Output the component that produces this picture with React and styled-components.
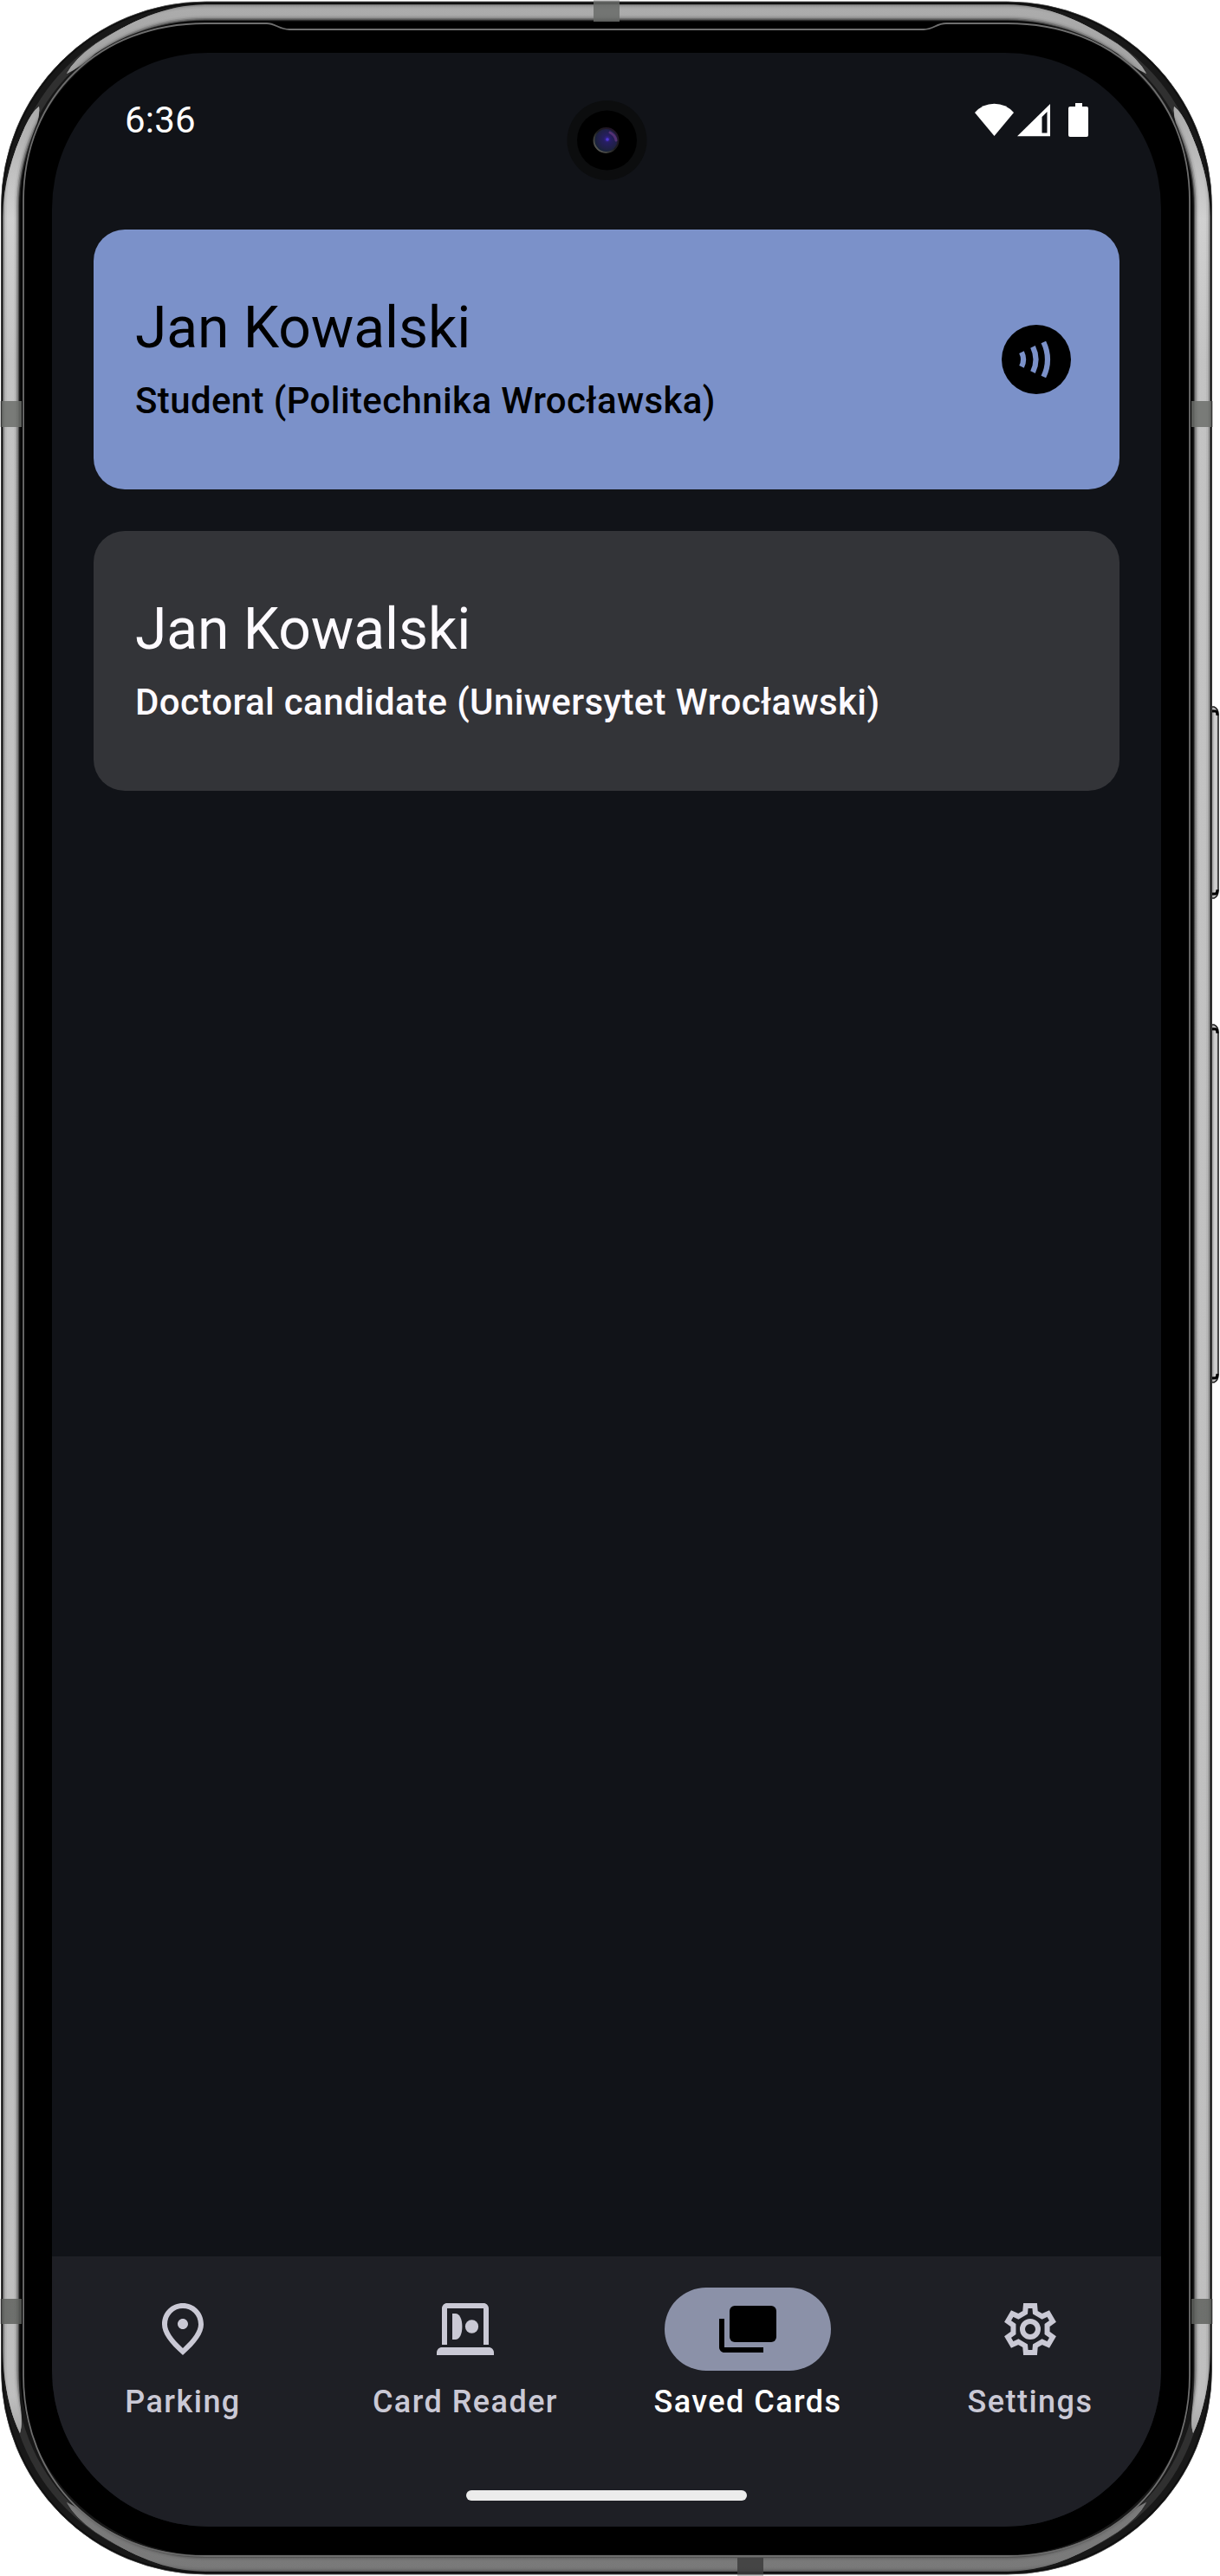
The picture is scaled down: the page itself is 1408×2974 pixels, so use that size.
import React from 'react';
import styled, { createGlobalStyle } from 'styled-components';

const GlobalStyle = createGlobalStyle`
  * { box-sizing: border-box; }
  html, body { margin: 0; padding: 0; background: #ffffff; }
  body { font-family: Roboto, "Noto Sans", sans-serif; }
`;

const Device = styled.div`
  position: relative;
  width: 1408px;
  height: 2974px;
  padding: 61px 68px 57px 60px;
  overflow: hidden;
`;

const FrameArt = styled.svg`
  position: absolute;
  inset: 0;
  display: block;
`;

const Screen = styled.main`
  position: relative;
  width: 1280px;
  height: 2856px;
  display: flex;
  flex-direction: column;
  overflow: hidden;
  border-radius: 180px;
  background: #111318;
`;

const StatusBar = styled.header`
  height: 156px;
  flex: none;
  display: flex;
  justify-content: space-between;
  padding: 53px 83px 0 84px;
  color: #ffffff;
`;

const Clock = styled.time`
  font-size: 42px;
  line-height: 49px;
  letter-spacing: 0.2px;
`;

const StatusIcons = styled.svg`
  display: block;
  margin-top: 4px;
`;

const Camera = styled.svg`
  position: absolute;
  left: 594px;
  top: 55px;
`;

const CardList = styled.section`
  flex: 1;
  display: flex;
  flex-direction: column;
  gap: 48px;
  padding: 48px;
`;

const Card = styled.article`
  height: 300px;
  display: flex;
  align-items: center;
  justify-content: space-between;
  padding: 0 48px;
  border-radius: 36px;
  background: ${(p) => (p.$active ? '#7b91c9' : '#333438')};
  color: ${(p) => (p.$active ? '#000000' : '#fdfaff')};
`;

const CardText = styled.div`
  display: flex;
  flex-direction: column;
  gap: 12px;
`;

const CardName = styled.h2`
  margin: 0;
  font-size: 66px;
  font-weight: 400;
  line-height: 84px;
  letter-spacing: -0.1px;
`;

const CardRole = styled.p`
  margin: 0;
  font-size: 42px;
  font-weight: 500;
  line-height: 60px;
  letter-spacing: 0.38px;
`;

const NavBar = styled.nav`
  height: 312px;
  flex: none;
  display: flex;
  flex-direction: column;
  align-items: center;
  background: #1e1f25;
`;

const Tabs = styled.div`
  width: 100%;
  height: 270px;
  display: grid;
  grid-template-columns: repeat(4, 1fr);
  column-gap: 24px;
  padding-top: 36px;
`;

const Tab = styled.div`
  display: flex;
  flex-direction: column;
  align-items: center;
  gap: 12px;
  color: ${(p) => (p.$active ? '#ffffff' : '#cac9d5')};
`;

const Pill = styled.span`
  width: 192px;
  height: 96px;
  display: flex;
  align-items: center;
  justify-content: center;
  border-radius: 48px;
  background: ${(p) => (p.$active ? '#8b91a8' : 'transparent')};
  color: ${(p) => (p.$active ? '#000000' : '#cac9d5')};
`;

const TabLabel = styled.span`
  font-size: 36px;
  font-weight: 500;
  line-height: 48px;
  letter-spacing: 1.45px;
  white-space: nowrap;
`;

const HomeHandle = styled.div`
  width: 324px;
  height: 12px;
  border-radius: 6px;
  background: #ececec;
`;

const Icon = ({ children }) => (
  <svg width="72" height="72" viewBox="0 0 24 24" fill="currentColor">{children}</svg>
);

const PinIcon = () => (
  <Icon>
    <path d="M12 12c-1.1 0-2-.9-2-2s.9-2 2-2 2 .9 2 2-.9 2-2 2zm6-1.8C18 6.57 15.35 4 12 4s-6 2.57-6 6.2c0 2.34 1.95 5.44 6 9.14 4.05-3.7 6-6.8 6-9.14zM12 2c4.2 0 8 3.22 8 8.2 0 3.32-2.67 7.25-8 11.8-5.33-4.55-8-8.48-8-11.8C4 5.22 7.8 2 12 2z" />
  </Icon>
);

const ReaderIcon = () => (
  <Icon>
    <path d="M3 18V4c0-1.1.9-2 2-2h14c1.1 0 2 .9 2 2v14h-2V4H5v14z" />
    <path d="M1 22v-1c0-1.1.9-2 2-2h18c1.1 0 2 .9 2 2v1z" />
    <path d="M7 6h1.2C9.700 6 10.800 8 10.800 11s-1.100 5-2.600 5H7z" />
    <circle cx="14.500" cy="11" r="2.550" />
  </Icon>
);

const CardsIcon = () => (
  <Icon>
    <rect x="5" y="3" width="18" height="14" rx="2" />
    <path d="M1 8h2v11h15v2H3c-1.100 0-2-.9-2-2z" />
  </Icon>
);

const gearPoints = [0, 60, 120, 180, 240, 300]
  .flatMap((deg) =>
    [[-1.95, -6.4], [-1.72, -9], [1.72, -9], [1.95, -6.4]].map(([x, y]) => {
      const a = (deg * Math.PI) / 180;
      const px = 12 + x * Math.cos(a) - y * Math.sin(a);
      const py = 12 + x * Math.sin(a) + y * Math.cos(a);
      return `${px.toFixed(2)},${py.toFixed(2)}`;
    })
  )
  .join(' ');

const GearIcon = () => (
  <Icon>
    <polygon points={gearPoints} fill="none" stroke="currentColor" strokeWidth="2" />
    <circle cx="12" cy="12" r="3" fill="none" stroke="currentColor" strokeWidth="2" />
  </Icon>
);

const ContactlessIcon = () => (
  <svg width="96" height="96" viewBox="0 0 24 24" fill="none">
    <circle cx="12" cy="12" r="10" fill="#000" />
    <g stroke="#7b91c9" strokeWidth="1.55">
      <path d="M7.750 9.900A4.700 4.700 0 0 1 7.750 14.100" />
      <path d="M11 8.350A8.400 8.400 0 0 1 11 15.650" />
      <path d="M14.080 7A11.300 11.300 0 0 1 14.080 17" />
    </g>
  </svg>
);

const metalRings = [
  [20, 0.3],
  [18, 0.4],
  [15, 0.5],
  [12, 0.6],
  [8, 0.6],
];

const Frame = () => (
  <FrameArt width="1408" height="2974" viewBox="0 0 1408 2974" fill="none">
    <defs>
      <linearGradient id="metal" gradientUnits="userSpaceOnUse" x1="0" y1="0" x2="0" y2="2974">
        <stop offset="0" stopColor="#b2b2b2" />
        <stop offset="0.03" stopColor="#a4a4a4" />
        <stop offset="0.085" stopColor="#d6d6d6" />
        <stop offset="0.14" stopColor="#c8c8c8" />
        <stop offset="0.9" stopColor="#c4c4c4" />
        <stop offset="0.93" stopColor="#c4c4c4" />
        <stop offset="0.97" stopColor="#7c7c7c" />
        <stop offset="1" stopColor="#7c7c7c" />
      </linearGradient>
      <linearGradient id="buttonMetal" x1="0" y1="0" x2="1" y2="0">
        <stop offset="0" stopColor="#8a8a8a" />
        <stop offset="0.5" stopColor="#d2d2d2" />
        <stop offset="1" stopColor="#c0c0c0" />
      </linearGradient>
      <clipPath id="shine">
        <path d="M77 85Q86 68 110 51C152 24 190 6 237 5H1163C1210 6 1248 24 1290 51Q1314 68 1323 85Q1306 77 1290 62C1252 37 1210 24 1163 24H237C190 24 148 37 110 62Q94 77 77 85z" />
        <path d="M77 2889Q86 2906 110 2923C152 2950 190 2968 237 2969H1163C1210 2968 1248 2950 1290 2923Q1314 2906 1323 2889Q1306 2897 1290 2912C1252 2937 1210 2950 1163 2950H237C190 2950 148 2937 110 2912Q94 2897 77 2889z" />
        <path d="M45 123Q37 129 29 146C14 179 4 212 3 250V2715C4 2750 11 2785 23 2809Q26 2800 24 2780C22 2765 22 2740 22 2715V250C22 205 33 165 43 142Q46 132 45 123z" />
        <path d="M1355 123Q1363 129 1371 146C1386 179 1396 212 1397 250V2715C1396 2750 1389 2785 1377 2809Q1374 2800 1376 2780C1378 2765 1378 2740 1378 2715V250C1378 205 1367 165 1357 142Q1354 132 1355 123z" />
      </clipPath>
    </defs>

    <g stroke="#222" strokeWidth="1.6" fill="url(#buttonMetal)">
      <path d="M1398 816h3q5 2 5 9v203q0 7-5 9h-3z" />
      <path d="M1398 1183h3q5 2 5 9v395q0 7-5 9h-3z" />
    </g>
    <g stroke="#000" strokeWidth="3">
      <path d="M1399 821h4q2 1 2 5" />
      <path d="M1399 1032h4q2-1 2-5" />
      <path d="M1399 1188h4q2 1 2 5" />
      <path d="M1399 1591h4q2-1 2-5" />
    </g>

    <rect x="1.500" y="2" width="1397" height="2970" rx="236" fill="#181818" stroke="#5a5a5a" strokeWidth="1" />
    <rect x="14" y="14.500" width="1372" height="2945" rx="224" stroke="#303030" strokeWidth="8" />
    <g clipPath="url(#shine)">
      {metalRings.map(([w, o]) => (
        <rect key={w} x="12" y="13.500" width="1376" height="2947" rx="225" stroke="url(#metal)" strokeWidth={w} strokeOpacity={o} />
      ))}
    </g>
    <rect x="2.500" y="3.500" width="1395" height="2967" rx="234" stroke="#000" strokeOpacity="0.5" strokeWidth="2" />
    <rect x="23.500" y="24.500" width="1353" height="2925" rx="213" fill="#000" />
    <path
      d="M27 232C27 110 115 27 237 27H308C318 27 322 34 334 34H1066C1078 34 1080 27 1092 27H1163C1285 27 1373 110 1373 232V2742C1373 2864 1285 2951 1163 2951H237C115 2951 27 2864 27 2742z"
      stroke="#6e6e6e"
      strokeWidth="1.800"
    />

    <g fillOpacity="0.85">
      <rect x="685" y="2" width="30" height="23" fill="#696b68" />
      <rect x="2" y="463" width="23" height="30" fill="#6c6e6b" />
      <rect x="1375" y="463" width="23" height="30" fill="#6c6e6b" />
      <rect x="2" y="2654" width="23" height="29" fill="#5f615e" />
      <rect x="1375" y="2654" width="23" height="29" fill="#5f615e" />
      <rect x="851" y="2953" width="30" height="19" fill="#3c3c3c" />
    </g>
    <g fill="#000" fillOpacity="0.22">
      <rect x="685" y="0" width="30" height="2" />
      <rect x="0" y="463" width="2" height="30" />
      <rect x="1398" y="463" width="2" height="30" />
      <rect x="0" y="2654" width="2" height="29" />
      <rect x="1398" y="2654" width="2" height="29" />
      <rect x="851" y="2972" width="30" height="2" />
    </g>
  </FrameArt>
);

const CameraLens = () => (
  <Camera width="94" height="94" viewBox="0 0 94 94" fill="none">
    <defs>
      <radialGradient id="lens" cx="0.550" cy="0.450" r="0.600">
        <stop offset="0" stopColor="#3a27a0" />
        <stop offset="0.250" stopColor="#261e62" />
        <stop offset="0.700" stopColor="#1f2044" />
        <stop offset="1" stopColor="#0e2330" />
      </radialGradient>
      <linearGradient id="rim" x1="0" y1="1" x2="1" y2="0">
        <stop offset="0" stopColor="#6a6a66" />
        <stop offset="0.500" stopColor="#1c1c1c" />
        <stop offset="1" stopColor="#24122e" />
      </linearGradient>
    </defs>
    <circle cx="46.500" cy="46" r="46" fill="#0c0d0e" />
    <circle cx="46.500" cy="46" r="34.500" fill="#000" />
    <circle cx="45.500" cy="46" r="14" fill="url(#lens)" stroke="url(#rim)" strokeWidth="2" />
    <path d="M50 37q6 3 7 9" stroke="#6a3782" strokeWidth="3" strokeLinecap="round" opacity="0.700" />
    <circle cx="47" cy="45" r="1.800" fill="#5038d8" />
  </Camera>
);

const StatusGlyphs = () => (
  <StatusIcons width="132" height="40" viewBox="0 0 132 40" fill="#fff">
    <path d="M0 12Q9 1.700 22.500 1.700T45 12L22.500 39z" />
    <path d="M49 39.300L87 2v37.300z" />
    <path d="M77.500 17L83.500 11V35.500H77.500z" fill="#111318" />
    <path d="M116 1h8v4h5q2 0 2 2v31q0 2-2 2h-19q-2 0-2-2V7q0-2 2-2h6z" />
  </StatusIcons>
);

const cards = [
  { name: 'Jan Kowalski', role: 'Student (Politechnika Wrocławska)', active: true },
  { name: 'Jan Kowalski', role: 'Doctoral candidate (Uniwersytet Wrocławski)', active: false },
];

const tabs = [
  { label: 'Parking', Glyph: PinIcon },
  { label: 'Card Reader', Glyph: ReaderIcon },
  { label: 'Saved Cards', Glyph: CardsIcon, active: true },
  { label: 'Settings', Glyph: GearIcon },
];

export default function App() {
  return (
    <>
      <GlobalStyle />
      <Device>
        <Frame />
        <Screen>
          <StatusBar>
            <Clock>6:36</Clock>
            <StatusGlyphs />
          </StatusBar>
          <CameraLens />
          <CardList>
            {cards.map((card) => (
              <Card key={card.role} $active={card.active}>
                <CardText>
                  <CardName>{card.name}</CardName>
                  <CardRole>{card.role}</CardRole>
                </CardText>
                {card.active && <ContactlessIcon />}
              </Card>
            ))}
          </CardList>
          <NavBar>
            <Tabs>
              {tabs.map(({ label, Glyph, active }) => (
                <Tab key={label} $active={active}>
                  <Pill $active={active}><Glyph /></Pill>
                  <TabLabel>{label}</TabLabel>
                </Tab>
              ))}
            </Tabs>
            <HomeHandle />
          </NavBar>
        </Screen>
      </Device>
    </>
  );
}
